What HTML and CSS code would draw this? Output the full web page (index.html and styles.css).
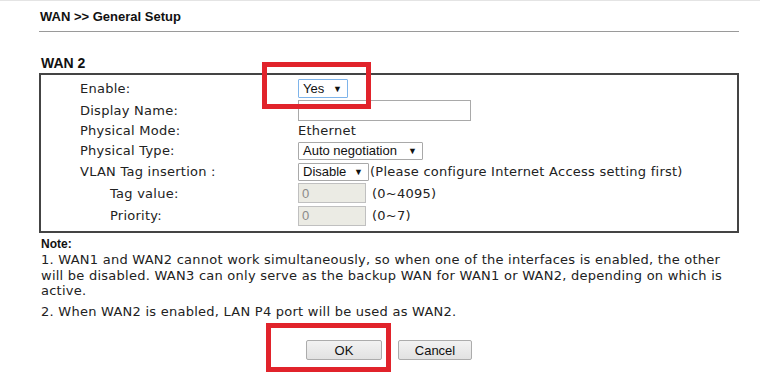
FILE: index.html
```html
<!DOCTYPE html>
<html>
<head>
<meta charset="utf-8">
<link rel="stylesheet" href="styles.css">
</head>
<body>
<div class="page">
  <div class="title">WAN &gt;&gt; General Setup</div>
  <div class="section">WAN 2</div>
  <div class="box">
    <div class="grid">
      <div class="lbl">Enable:</div>
      <div class="ctl"><div class="sel sel-yes focus"><span>Yes</span><span class="arr">&#9660;</span></div></div>
      <div class="lbl">Display Name:</div>
      <div class="ctl"><div class="inp inp-name"></div></div>
      <div class="lbl">Physical Mode:</div>
      <div class="ctl"><span class="val">Ethernet</span></div>
      <div class="lbl">Physical Type:</div>
      <div class="ctl"><div class="sel sel-auto"><span>Auto negotiation</span><span class="arr">&#9660;</span></div></div>
      <div class="lbl">VLAN Tag insertion :</div>
      <div class="ctl"><div class="sel sel-dis"><span>Disable</span><span class="arr">&#9660;</span></div><span class="hint">(Please configure Internet Access setting first)</span></div>
      <div class="lbl sub">Tag value:</div>
      <div class="ctl"><div class="inp inp-off">0</div><span class="hint gap">(0~4095)</span></div>
      <div class="lbl sub">Priority:</div>
      <div class="ctl"><div class="inp inp-off">0</div><span class="hint gap">(0~7)</span></div>
    </div>
  </div>
  <div class="note">
    <div class="note-h">Note:</div>
    <p>1. WAN1 and WAN2 cannot work simultaneously, so when one of the interfaces is enabled, the other will be disabled. WAN3 can only serve as the backup WAN for WAN1 or WAN2, depending on which is active.</p>
    <p class="p2">2. When WAN2 is enabled, LAN P4 port will be used as WAN2.</p>
  </div>
  <div class="buttons">
    <div class="btn btn-ok">OK</div>
    <div class="btn btn-cancel">Cancel</div>
  </div>
  <div class="mark mark-top"></div>
  <div class="mark mark-bottom"></div>
</div>
</body>
</html>
```
FILE: styles.css
```css
* { box-sizing: border-box; }
html, body { margin: 0; padding: 0; background: #fff; }
body {
  width: 760px;
  height: 373px;
  overflow: hidden;
  border-top: 1px solid #e4e4e4;
  font-family: "DejaVu Sans", Verdana, sans-serif;
  font-size: 13px;
  letter-spacing: 0.25px;
  color: #222;
}
.page {
  position: relative;
  margin-left: 39px;
  width: 700px;
  height: 372px;
}
.title {
  font-family: "Liberation Sans", Arial, sans-serif;
  font-weight: bold;
  font-size: 13px;
  letter-spacing: 0;
  color: #111;
  padding: 8px 0 0 1px;
  height: 31px;
  border-bottom: 1px solid #9a9a9a;
}
.section {
  font-family: "Liberation Sans", Arial, sans-serif;
  font-weight: bold;
  font-size: 14px;
  letter-spacing: 0;
  color: #111;
  padding: 23px 0 0 2px;
  height: 41px;
}
.box {
  border: 2px solid #444;
  padding: 3px 0 4px 0;
  height: 160px;
}
.grid {
  display: grid;
  grid-template-columns: 257px 1fr;
  grid-template-rows: 21px 22px 19px 21px 21px 22px 23px;
}
.lbl {
  display: flex;
  align-items: center;
  padding-left: 39px;
  white-space: nowrap;
}
.lbl.sub { padding-left: 69px; }
.ctl {
  display: flex;
  align-items: center;
  white-space: nowrap;
}
.sel {
  display: flex;
  align-items: center;
  justify-content: space-between;
  border: 1px solid #a9a9a9;
  border-radius: 1px;
  background: #fff;
  font-family: "Liberation Sans", Arial, sans-serif;
  font-size: 13px;
  letter-spacing: 0;
  color: #111;
  padding: 0 5px 0 4px;
}
.sel.focus { border-color: #7eb4ea; }
.arr { font-size: 9px; color: #111; }
.sel-yes { width: 50px; height: 19px; }
.sel-auto { width: 125px; height: 18px; }
.sel-dis { width: 71px; height: 18px; }
.inp {
  border: 1px solid #a9a9a9;
  background: #fff;
  font-family: "Liberation Sans", Arial, sans-serif;
  font-size: 13px;
  letter-spacing: 0;
  display: flex;
  align-items: center;
  padding-left: 3px;
}
.inp-name { width: 173px; height: 21px; }
.inp-off {
  width: 68px;
  height: 20px;
  background: #ebebe4;
  color: #8a8a8a;
  border-color: #c0c0c0;
}
.hint { margin-left: 1px; }
.hint.gap { margin-left: 6px; }
.note {
  padding: 4px 0 0 2px;
  line-height: 15.5px;
  width: 692px;
}
.note-h {
  font-family: "Liberation Sans", Arial, sans-serif;
  font-weight: bold;
  font-size: 12px;
  letter-spacing: 0;
  color: #111;
  line-height: 15px;
}
.note p { margin: 0; }
.note p.p2 { margin-top: 5px; }
.buttons {
  display: flex;
  justify-content: center;
  gap: 16px;
  margin-top: 21px;
}
.btn {
  height: 20px;
  display: flex;
  align-items: center;
  justify-content: center;
  border: 1px solid #acacac;
  border-radius: 2px;
  background: linear-gradient(#f2f2f2, #e2e2e2);
  font-family: "Liberation Sans", Arial, sans-serif;
  font-size: 13px;
  letter-spacing: 0;
  color: #111;
}
.btn-ok { width: 76px; }
.btn-cancel { width: 74px; }
.mark {
  position: absolute;
  border: 5px solid #e1232b;
}
.mark-top { left: 223px; top: 61px; width: 109px; height: 47px; }
.mark-bottom { left: 227px; top: 322px; width: 125px; height: 49px; }
```
